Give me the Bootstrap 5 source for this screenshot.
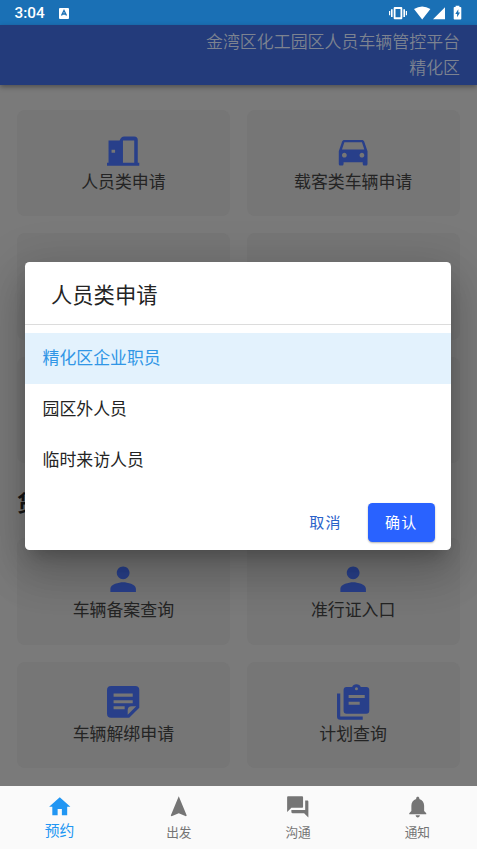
<!DOCTYPE html>
<html lang="zh-CN">
<head>
<meta charset="utf-8">
<meta name="viewport" content="width=device-width, initial-scale=1">
<title>金湾区化工园区人员车辆管控平台</title>
<link href="https://cdn.jsdelivr.net/npm/bootstrap@5.3.0/dist/css/bootstrap.min.css" rel="stylesheet">
<style>
body{font-family:"Noto Sans CJK SC",sans-serif;background:#7a7a7a;color:#242424}
.phone{width:477px;height:849px}
.status{height:25px;background:#1a70b5;font:500 15.3px/25px Roboto,sans-serif;padding:1px 0 0 14.5px}
.topbar{height:60px;background:#233b7b;color:#7d8390;font-size:16.95px;font-weight:350;line-height:25.5px;padding:3px 17px 0;box-shadow:0 2px 5px rgba(0,0,0,.35);z-index:1}
.content{padding:25px 17.5px 0 17px}
.tiles{display:grid;grid-template-columns:1fr 1fr;gap:17px;grid-auto-rows:106.4px}
.tile{background:#767676;border-radius:8px;padding-top:21.5px;font-size:16.9px;line-height:24px}
.tile svg{width:38.3px;height:38.3px;fill:#283f8a;flex-shrink:0}
.tile span{margin-top:-.5px}
.section-name{font-size:22px;font-weight:700;line-height:30px;height:75px;padding-top:23px;color:#161616}
.sheet{left:25px;top:262px;width:426px;height:287.5px;background:#fff;border-radius:4.5px;z-index:5;box-shadow:0 12px 16px -7px rgba(0,0,0,.2),0 25px 40px 3px rgba(0,0,0,.14),0 10px 49px 8px rgba(0,0,0,.12)}
.sheet-title{height:63px;border-bottom:1px solid #dcdcdc;font-size:21.3px;line-height:63px;padding-left:26px;margin-bottom:8px}
.option{height:51px;line-height:48px;padding-left:17.5px;font-size:16.9px}
.option.chosen{background:#e3f2fd;color:#3096e6}
.sheet .btn{font-size:15px;letter-spacing:1.3px;height:38.3px;line-height:38px;padding:0;border:0;border-radius:4.5px}
.btn-cancel{width:68px;color:#2a62c9}
.btn-ok,.btn-ok:hover{width:67.5px;background:#2962ff;color:#fff;box-shadow:0 1px 2px rgba(0,0,0,.3)}
.tabs{height:63px;background:#fafafa;color:#757575;font-size:12.7px;line-height:18px;padding-top:8px;z-index:2}
.tabs svg{width:25.5px;height:25.5px;fill:currentColor}
.tabs span{margin-top:3px}
.tabs .current{color:#2196f3;font-size:14.8px}
.tabs .current span{margin-top:1px}
</style>
<script src="https://cdn.jsdelivr.net/npm/bootstrap@5.3.0/dist/js/bootstrap.bundle.min.js"></script>
</head>
<body>
<div class="phone position-relative overflow-hidden d-flex flex-column">
  <div class="status text-white d-flex align-items-center flex-shrink-0">
    <span>3:04</span>
    <svg width="10" height="11" viewBox="0 0 10 11" style="margin-left:14px"><rect width="10" height="11" rx="1" fill="#fff"/><path d="M2.500 7.500 5 2.500 7.500 7.500M3.400 6h3.200" fill="none" stroke="#1a70b5" stroke-width="1.300"/></svg>
    <svg class="ms-auto" width="88" height="25" viewBox="389 .5 88 25" fill="#fff"><path fill-rule="evenodd" d="M394.700 6.500h6.600q1 0 1 1v10.300q0 1-1 1h-6.600q-1 0-1-1V7.500q0-1 1-1zm.8 2v8.300h5V8.500z"/><path d="M391 8.800h1.600v7.800H391zM389 10.500h1.200v4.200H389zM403.400 8.800h1.600v7.800h-1.600zM405.800 10.500h1.200v4.200h-1.200z"/><path d="M414 8.600q8.200-5.200 16.400 0L422.200 19zM433 18.800 445 6.800v12z"/><path fill-rule="evenodd" d="M455.600 5.200h3.800v1.300h1.100q.8 0 .8.800v11q0 .8-.8.800h-6q-.8 0-.8-.8v-11q0-.8.8-.8h1.100zm2.700 3.600-3 4.700h1.800v3.300l2.900-4.700h-1.700z"/></svg>
  </div>
  <header class="topbar text-end flex-shrink-0 position-relative"><div>金湾区化工园区人员车辆管控平台</div><div>精化区</div></header>
  <main class="content flex-grow-1 overflow-hidden">
    <div class="tiles">
      <div class="tile d-flex flex-column align-items-center">
        <svg viewBox="0 0 38 38"><path fill-rule="evenodd" d="M4.500 8.500H15.500Q17 4.500 20 4.500H30Q33.500 4.500 33.500 8V30.500H35V33.500H3V30.500H4.500zM18.800 8.500V30.500H30V8.500zM7.500 17.500V20.500H11V17.500z"/></svg><span>人员类申请</span></div>
      <div class="tile d-flex flex-column align-items-center">
        <svg viewBox="0 0 24 24"><path d="M18.920 6.010C18.720 5.420 18.160 5 17.500 5h-11c-.66 0-1.210.42-1.420 1.010L3 12v8c0 .55.450 1 1 1h1c.55 0 1-.45 1-1v-1h12v1c0 .55.450 1 1 1h1c.55 0 1-.45 1-1v-8l-2.080-5.990zM6.500 16c-.83 0-1.500-.67-1.500-1.500S5.670 13 6.500 13s1.500.67 1.500 1.500S7.330 16 6.500 16zm11 0c-.83 0-1.500-.67-1.500-1.500s.67-1.500 1.500-1.500 1.500.67 1.500 1.500-.67 1.500-1.500 1.500zM5 11l1.500-4.500h11L19 11H5z"/></svg><span>载客类车辆申请</span></div>
      <div class="tile"></div><div class="tile"></div>
      <div class="tile"></div><div class="tile"></div>
    </div>
    <div class="section-name">货</div>
    <div class="tiles">
      <div class="tile d-flex flex-column align-items-center">
        <svg viewBox="0 0 24 24"><path d="M12 12c2.210 0 4-1.790 4-4s-1.790-4-4-4-4 1.790-4 4 1.790 4 4 4zm0 2c-2.670 0-8 1.340-8 4v2h16v-2c0-2.660-5.330-4-8-4z"/></svg><span>车辆备案查询</span></div>
      <div class="tile d-flex flex-column align-items-center">
        <svg viewBox="0 0 24 24"><path d="M12 12c2.210 0 4-1.790 4-4s-1.790-4-4-4-4 1.790-4 4 1.790 4 4 4zm0 2c-2.670 0-8 1.340-8 4v2h16v-2c0-2.660-5.330-4-8-4z"/></svg><span>准行证入口</span></div>
      <div class="tile d-flex flex-column align-items-center">
        <svg viewBox="0 0 38 38"><path fill-rule="evenodd" d="M7 3H31Q35 3 35 7V24.500L25 34.500H7Q3 34.500 3 30.500V7Q3 3 7 3zM9.500 10.500V13.700H28.500V10.500zM9.500 17V20H28.500V17zM9.500 23V26H20.500V23zM23.500 31.500 32 23H27.500Q23.500 23 23.500 27z"/></svg><span>车辆解绑申请</span></div>
      <div class="tile d-flex flex-column align-items-center">
        <svg viewBox="0 0 38 38"><path fill-rule="evenodd" d="M12.500 4H18Q19 1.200 22.300 1.200T26.500 4H32Q35 4 35 7V27.500Q35 30.500 32 30.500H12.500Q9.500 30.500 9.500 27.500V7Q9.500 4 12.500 4zM22.300 4.200A1.500 1.500 0 1 0 22.300 7.200 1.500 1.500 0 1 0 22.300 4.200zM14.500 12V15H30.500V12zM14.500 18.500V21.500H25.500V18.500z"/><path d="M3 10.500H6.200V33.300H28.500V36.500H6Q3 36.500 3 33.500z"/></svg><span>计划查询</span></div>
    </div>
  </main>
  <nav class="tabs d-flex flex-shrink-0 position-relative">
    <div class="col current d-flex flex-column align-items-center"><svg viewBox="0 0 24 24"><path d="M10 20v-6h4v6h5v-8h3L12 3 2 12h3v8z"/></svg><span>预约</span></div>
    <div class="col d-flex flex-column align-items-center"><svg viewBox="0 0 24 24"><path d="M12 2 4.500 20.290l.71.710L12 18l6.790 3 .71-.710z"/></svg><span>出发</span></div>
    <div class="col d-flex flex-column align-items-center"><svg viewBox="0 0 24 24"><path d="M21 6h-2v9H6v2c0 .55.450 1 1 1h11l4 4V7c0-.55-.45-1-1-1zm-4 6V3c0-.55-.45-1-1-1H3c-.55 0-1 .45-1 1v14l4-4h10c.55 0 1-.45 1-1z"/></svg><span>沟通</span></div>
    <div class="col d-flex flex-column align-items-center"><svg viewBox="0 0 24 24"><path d="M12 22c1.100 0 2-.9 2-2h-4c0 1.100.89 2 2 2zm6-6v-5c0-3.070-1.640-5.640-4.500-6.320V4c0-.83-.67-1.500-1.500-1.500s-1.500.67-1.500 1.500v.68C7.630 5.360 6 7.920 6 11v5l-2 2v1h16v-1l-2-2z"/></svg><span>通知</span></div>
  </nav>
  <div class="sheet position-absolute d-flex flex-column" role="dialog">
    <div class="sheet-title">人员类申请</div>
    <div class="option chosen">精化区企业职员</div>
    <div class="option">园区外人员</div>
    <div class="option">临时来访人员</div>
    <div class="d-flex justify-content-end gap-2 mt-auto pb-2 pe-3"><button class="btn btn-cancel">取消</button><button class="btn btn-ok">确认</button></div>
  </div>
</div>
</body>
</html>
